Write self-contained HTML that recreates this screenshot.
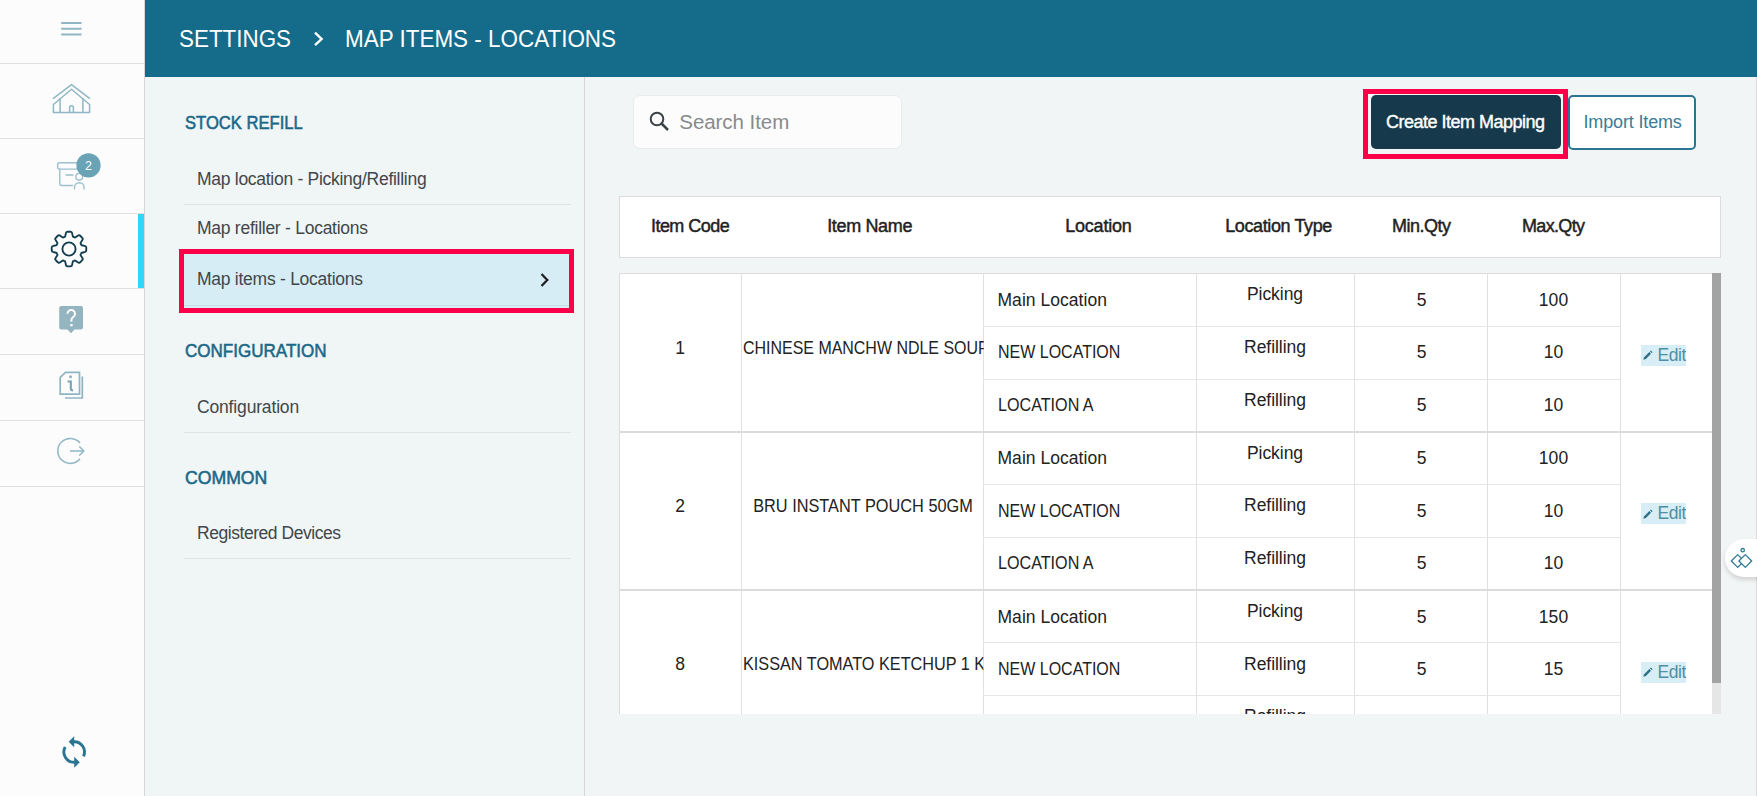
<!DOCTYPE html>
<html><head><meta charset="utf-8">
<style>
*{box-sizing:border-box;margin:0;padding:0}
html,body{width:1757px;height:796px;overflow:hidden;background:#f1f5f5;font-family:"Liberation Sans",sans-serif;position:relative}
.a{position:absolute}
.t{position:absolute;line-height:1;white-space:nowrap}
</style></head><body>
<div class="a" style="left:0;top:0;width:144px;height:796px;background:#fcfcfc"></div>
<div class="a" style="left:144px;top:0;width:1px;height:796px;background:#d6d6d6"></div>
<div class="a" style="left:0;top:63px;width:144px;height:1px;background:#e0e0e0"></div>
<div class="a" style="left:0;top:138px;width:144px;height:1px;background:#e0e0e0"></div>
<div class="a" style="left:0;top:213px;width:144px;height:1px;background:#e0e0e0"></div>
<div class="a" style="left:0;top:288px;width:144px;height:1px;background:#e0e0e0"></div>
<div class="a" style="left:0;top:354px;width:144px;height:1px;background:#e0e0e0"></div>
<div class="a" style="left:0;top:420px;width:144px;height:1px;background:#e0e0e0"></div>
<div class="a" style="left:0;top:486px;width:144px;height:1px;background:#e0e0e0"></div>
<div class="a" style="left:138px;top:214px;width:6px;height:74px;background:#2bd9f5"></div>
<svg class="a" style="left:60px;top:20px" width="24" height="18" viewBox="0 0 24 18"><path d="M1.2 3h20.3M1.2 8.8h20.3M1.2 14.4h20.3" stroke="#8fb5c5" stroke-width="2" fill="none"/></svg>
<svg class="a" style="left:50px;top:80px" width="44" height="36" viewBox="0 0 44 36">
<g fill="none" stroke="#8fb7c5" stroke-width="1.5" stroke-linejoin="round" stroke-linecap="round">
<path d="M3.4 18.3 L21.5 4.6 L39.6 18.3"/>
<path d="M3.4 24.5 L21.5 9.3 L39.6 24.5 V32.4 H3.4 Z"/>
<path d="M10.1 18.8 V32.4 M32.9 18.8 V32.4"/>
<path d="M19.6 32.4 V27.6 a1.9 1.9 0 0 1 3.8 0 V32.4"/>
</g></svg>
<svg class="a" style="left:54px;top:150px" width="50" height="42" viewBox="0 0 50 42">
<g fill="none" stroke="#9bbfcc" stroke-width="1.4" stroke-linecap="round">
<rect x="3.6" y="12.8" width="22" height="6.3" rx="2"/>
<path d="M5.8 19.2 V33.5 a2 2 0 0 0 2 2 H18.5"/>
<path d="M12 25 H19"/>
<circle cx="25.2" cy="26.8" r="3.4"/>
<path d="M20.5 38.9 V37.5 a4.8 4.8 0 0 1 9.6 0 V38.9"/>
</g>
<circle cx="34.5" cy="15.4" r="12.1" fill="#69a3b5"/>
<text x="34.4" y="20" font-family="Liberation Sans" font-size="12.5" fill="#fff" text-anchor="middle">2</text>
</svg>
<svg class="a" style="left:47.9px;top:228.3px" width="42" height="42" viewBox="-21 -21 42 42">
<g fill="none" stroke="#123c50" stroke-width="1.85" stroke-linejoin="round">
<path d="M-4.37 -12.14L-4.06 -12.24Q-3.80 -12.33 -3.50 -13.90L-3.20 -15.48Q-2.90 -17.06 -2.25 -17.14L-1.46 -17.24L0.00 -17.30L1.46 -17.24L2.25 -17.14Q2.90 -17.06 3.20 -15.48L3.50 -13.90Q3.80 -12.33 4.06 -12.24L4.37 -12.14L4.94 -11.92L5.49 -11.67L5.79 -11.53Q6.03 -11.40 7.35 -12.30L8.69 -13.21Q10.01 -14.11 10.53 -13.71L11.16 -13.22L12.23 -12.23L13.22 -11.16L13.71 -10.53Q14.11 -10.01 13.21 -8.69L12.30 -7.35Q11.40 -6.03 11.53 -5.79L11.67 -5.49L11.92 -4.94L12.14 -4.37L12.24 -4.06Q12.33 -3.80 13.90 -3.50L15.48 -3.20Q17.06 -2.90 17.14 -2.25L17.24 -1.46L17.30 0.00L17.24 1.46L17.14 2.25Q17.06 2.90 15.48 3.20L13.90 3.50Q12.33 3.80 12.24 4.06L12.14 4.37L11.92 4.94L11.67 5.49L11.53 5.79Q11.40 6.03 12.30 7.35L13.21 8.69Q14.11 10.01 13.71 10.53L13.22 11.16L12.23 12.23L11.16 13.22L10.53 13.71Q10.01 14.11 8.69 13.21L7.35 12.30Q6.03 11.40 5.79 11.53L5.49 11.67L4.94 11.92L4.37 12.14L4.06 12.24Q3.80 12.33 3.50 13.90L3.20 15.48Q2.90 17.06 2.25 17.14L1.46 17.24L0.00 17.30L-1.46 17.24L-2.25 17.14Q-2.90 17.06 -3.20 15.48L-3.50 13.90Q-3.80 12.33 -4.06 12.24L-4.37 12.14L-4.94 11.92L-5.49 11.67L-5.79 11.53Q-6.03 11.40 -7.35 12.30L-8.69 13.21Q-10.01 14.11 -10.53 13.71L-11.16 13.22L-12.23 12.23L-13.22 11.16L-13.71 10.53Q-14.11 10.01 -13.21 8.69L-12.30 7.35Q-11.40 6.03 -11.53 5.79L-11.67 5.49L-11.92 4.94L-12.14 4.37L-12.24 4.06Q-12.33 3.80 -13.90 3.50L-15.48 3.20Q-17.06 2.90 -17.14 2.25L-17.24 1.46L-17.30 0.00L-17.24 -1.46L-17.14 -2.25Q-17.06 -2.90 -15.48 -3.20L-13.90 -3.50Q-12.33 -3.80 -12.24 -4.06L-12.14 -4.37L-11.92 -4.94L-11.67 -5.49L-11.53 -5.79Q-11.40 -6.03 -12.30 -7.35L-13.21 -8.69Q-14.11 -10.01 -13.71 -10.53L-13.22 -11.16L-12.23 -12.23L-11.16 -13.22L-10.53 -13.71Q-10.01 -14.11 -8.69 -13.21L-7.35 -12.30Q-6.03 -11.40 -5.79 -11.53L-5.49 -11.67L-4.94 -11.92L-4.37 -12.14Z"/><circle cx="0" cy="0" r="6.6"/></g></svg>
<svg class="a" style="left:58px;top:305px" width="27" height="30" viewBox="0 0 27 30">
<path d="M3.2 1 H23 a2 2 0 0 1 2 2 V22.5 a2 2 0 0 1 -2 2 H16.5 L13 28.3 L9.5 24.5 H3.2 a2 2 0 0 1 -2 -2 V3 a2 2 0 0 1 2 -2 z" fill="#94b4c0"/>
<path d="M9.4 8.8 a3.8 3.8 0 1 1 5.8 3.2 c-1.3 0.8 -1.8 1.6 -1.8 3.2 v1.2" stroke="#fff" stroke-width="2" fill="none"/>
<rect x="12.3" y="19" width="2.3" height="2.3" fill="#fff"/></svg>
<svg class="a" style="left:59px;top:371px" width="27" height="30" viewBox="0 0 27 30">
<g fill="none" stroke="#8fb5c3" stroke-width="1.7">
<path d="M6.5 1.3 H20.5 V23.2 H1.2 V6.3 Z"/>
<path d="M23.3 5.5 V27 H6"/></g>
<circle cx="11.6" cy="5.8" r="1.5" fill="#8fb5c3"/>
<path d="M8.5 10.5 H11.8 V17.8 c0 1 0.5 1.5 2.2 1.5" stroke="#7aa7b7" stroke-width="2.2" fill="none"/></svg>
<svg class="a" style="left:57px;top:436px" width="30" height="30" viewBox="0 0 30 30">
<g fill="none" stroke="#8fb7c6" stroke-width="1.5">
<path d="M23 7 A12.5 12.5 0 1 0 23 22.8"/>
<path d="M13 15 H26.5 M22.3 10.5 L26.8 15 L22.3 19.5"/></g></svg>
<svg class="a" style="left:58px;top:732px" width="32" height="40" viewBox="0 0 32 40">
<g fill="none" stroke="#2b7592" stroke-width="2.9">
<path d="M15.6 9.7 A10.3 10.3 0 0 1 25.53 24.35"/>
<path d="M16.8 30.3 A10.3 10.3 0 0 1 7.19 15.01"/></g>
<g fill="#2b7592">
<path d="M10.6 9.8 L16.2 4.3 L16.2 15.3 Z"/>
<path d="M21.8 30.2 L16.2 24.7 L16.2 35.8 Z"/></g></svg>
<div class="a" style="left:145px;top:0;width:1612px;height:77px;background:#156b8a"></div>
<div class="t" style="left:178.7px;top:28.11px;font-size:23.5px;color:#fff;letter-spacing:0px;font-weight:400;transform:scaleX(0.953);transform-origin:0 0;">SETTINGS</div>
<svg class="a" style="left:312px;top:31px" width="14" height="16" viewBox="0 0 14 16"><path d="M3 1.6 L9.6 8 L3 14.2" stroke="#fff" stroke-width="2.4" fill="none"/></svg>
<div class="t" style="left:345.2px;top:28.11px;font-size:23.5px;color:#fff;letter-spacing:0px;font-weight:400;transform:scaleX(0.955);transform-origin:0 0;">MAP ITEMS - LOCATIONS</div>
<div class="a" style="left:145px;top:77px;width:439px;height:719px;background:#f0f5f5"></div>
<div class="a" style="left:584px;top:77px;width:1px;height:719px;background:#d8d5d5"></div>
<div class="t" style="left:185px;top:114.26px;font-size:18px;color:#1a6888;letter-spacing:0px;font-weight:400;-webkit-text-stroke:0.55px #1a6888;transform:scaleX(0.922);transform-origin:0 0;">STOCK REFILL</div>
<div class="t" style="left:197px;top:170.69px;font-size:17.5px;color:#3f474a;letter-spacing:-0.28px;font-weight:400;">Map location - Picking/Refilling</div>
<div class="a" style="left:184px;top:204px;width:387px;height:1px;background:#dde3e3"></div>
<div class="t" style="left:197px;top:219.59px;font-size:17.5px;color:#3f474a;letter-spacing:-0.26px;font-weight:400;">Map refiller - Locations</div>
<div class="a" style="left:184px;top:254px;width:385px;height:54px;background:#d6edf5"></div>
<div class="a" style="left:184px;top:305px;width:385px;height:1px;background:#c9dde3"></div>
<div class="a" style="left:179px;top:249px;width:395px;height:64px;border:5px solid #fb0049"></div>
<div class="t" style="left:197px;top:270.59px;font-size:17.5px;color:#3f474a;letter-spacing:-0.26px;font-weight:400;">Map items - Locations</div>
<svg class="a" style="left:538px;top:272px" width="14" height="16" viewBox="0 0 14 16"><path d="M3.5 2 L9.3 8 L3.5 14" stroke="#222" stroke-width="2.3" fill="none"/></svg>
<div class="t" style="left:184.5px;top:341.76px;font-size:18px;color:#1a6888;letter-spacing:0px;font-weight:400;-webkit-text-stroke:0.55px #1a6888;transform:scaleX(0.946);transform-origin:0 0;">CONFIGURATION</div>
<div class="t" style="left:197px;top:398.79px;font-size:17.5px;color:#3f474a;letter-spacing:-0.16px;font-weight:400;">Configuration</div>
<div class="a" style="left:184px;top:432px;width:387px;height:1px;background:#dde3e3"></div>
<div class="t" style="left:184.5px;top:469.06px;font-size:18px;color:#1a6888;letter-spacing:0px;font-weight:400;-webkit-text-stroke:0.55px #1a6888;transform:scaleX(0.98);transform-origin:0 0;">COMMON</div>
<div class="t" style="left:197px;top:524.79px;font-size:17.5px;color:#3f474a;letter-spacing:-0.45px;font-weight:400;">Registered Devices</div>
<div class="a" style="left:184px;top:558px;width:387px;height:1px;background:#dde3e3"></div>
<div class="a" style="left:633px;top:95px;width:269px;height:53.5px;background:#fcfcfc;border:1px solid #e9eded;border-radius:7px"></div>
<svg class="a" style="left:648px;top:110px" width="23" height="23" viewBox="0 0 23 23"><circle cx="9" cy="9" r="6.3" stroke="#3a4346" stroke-width="2.0" fill="none"/><path d="M13.5 13.5 L20 20" stroke="#3a4346" stroke-width="2.5"/></svg>
<div class="t" style="left:679.3px;top:112.15px;font-size:20.5px;color:#868b8d;letter-spacing:-0.06px;font-weight:400;">Search Item</div>
<div class="a" style="left:1363px;top:89px;width:205px;height:70px;border:5px solid #fb0049"></div>
<div class="a" style="left:1371px;top:95px;width:190px;height:54px;background:#163a4c;border-radius:5px"></div>
<div class="t" style="left:1386px;top:113.06px;font-size:18px;color:#fff;letter-spacing:-0.5px;font-weight:400;-webkit-text-stroke:0.4px #fff;">Create Item Mapping</div>
<div class="a" style="left:1568px;top:95px;width:128px;height:55px;background:#fff;border:2px solid #2b7592;border-radius:5px"></div>
<div class="t" style="left:1583.5px;top:113.06px;font-size:18px;color:#3a7c95;letter-spacing:-0.15px;font-weight:400;">Import Items</div>
<div class="a" style="left:619px;top:196px;width:1102px;height:62px;background:#fff;border:1px solid #dcdcdc"></div>
<div class="t" style="left:651px;top:217.16px;font-size:18px;color:#1f2223;letter-spacing:-0.55px;font-weight:400;-webkit-text-stroke:0.45px #1f2223;">Item Code</div>
<div class="t" style="left:827.2px;top:217.16px;font-size:18px;color:#1f2223;letter-spacing:-0.35px;font-weight:400;-webkit-text-stroke:0.45px #1f2223;">Item Name</div>
<div class="t" style="left:1065.2px;top:217.16px;font-size:18px;color:#1f2223;letter-spacing:-0.21px;font-weight:400;-webkit-text-stroke:0.45px #1f2223;">Location</div>
<div class="t" style="left:1225.2px;top:217.16px;font-size:18px;color:#1f2223;letter-spacing:-0.39px;font-weight:400;-webkit-text-stroke:0.45px #1f2223;">Location Type</div>
<div class="t" style="left:1392px;top:217.16px;font-size:18px;color:#1f2223;letter-spacing:-0.5px;font-weight:400;-webkit-text-stroke:0.45px #1f2223;">Min.Qty</div>
<div class="t" style="left:1522px;top:217.16px;font-size:18px;color:#1f2223;letter-spacing:-0.67px;font-weight:400;-webkit-text-stroke:0.45px #1f2223;">Max.Qty</div>
<div class="a" style="left:619px;top:273px;width:1093px;height:441px;background:#fff;overflow:hidden"><div class="a" style="left:0;top:0;width:1px;height:441px;background:#dcdcdc"></div>
<div class="a" style="left:0;top:0;width:1093px;height:1px;background:#dcdcdc"></div>
<div class="a" style="left:122px;top:0;width:1px;height:441px;background:#e0e0e0"></div>
<div class="a" style="left:364px;top:0;width:1px;height:441px;background:#e0e0e0"></div>
<div class="a" style="left:577px;top:0;width:1px;height:441px;background:#e0e0e0"></div>
<div class="a" style="left:735px;top:0;width:1px;height:441px;background:#e0e0e0"></div>
<div class="a" style="left:868px;top:0;width:1px;height:441px;background:#e0e0e0"></div>
<div class="a" style="left:1001px;top:0;width:1px;height:441px;background:#e0e0e0"></div>
<div class="a" style="left:364px;top:53px;width:637px;height:1px;background:#e6e6e6"></div>
<div class="a" style="left:364px;top:106px;width:637px;height:1px;background:#e6e6e6"></div>
<div class="t" style="left:0px;top:66.69px;font-size:17.5px;color:#222;letter-spacing:0px;font-weight:400;width:122px;text-align:center;">1</div>
<div class="t" style="left:123.5px;top:66.69px;font-size:17.5px;color:#222;letter-spacing:0px;font-weight:400;transform:scaleX(0.912);transform-origin:0 0;width:263.71px;overflow:hidden;">CHINESE MANCHW NDLE SOUP</div>
<div class="t" style="left:378.5px;top:18.69px;font-size:17.5px;color:#222;letter-spacing:0.04px;font-weight:400;">Main Location</div>
<div class="t" style="left:577px;top:13.39px;font-size:17.5px;color:#222;letter-spacing:-0.05px;font-weight:400;width:158px;text-align:center;">Picking</div>
<div class="t" style="left:736px;top:18.69px;font-size:17.5px;color:#222;letter-spacing:0px;font-weight:400;width:133px;text-align:center;">5</div>
<div class="t" style="left:868px;top:18.69px;font-size:17.5px;color:#222;letter-spacing:0.1px;font-weight:400;width:133px;text-align:center;">100</div>
<div class="t" style="left:378.5px;top:71.29px;font-size:17.5px;color:#222;letter-spacing:0px;font-weight:400;transform:scaleX(0.914);transform-origin:0 0;">NEW LOCATION</div>
<div class="t" style="left:577px;top:65.99px;font-size:17.5px;color:#222;letter-spacing:-0.05px;font-weight:400;width:158px;text-align:center;">Refilling</div>
<div class="t" style="left:736px;top:71.29px;font-size:17.5px;color:#222;letter-spacing:0px;font-weight:400;width:133px;text-align:center;">5</div>
<div class="t" style="left:868px;top:71.29px;font-size:17.5px;color:#222;letter-spacing:0.1px;font-weight:400;width:133px;text-align:center;">10</div>
<div class="t" style="left:378.5px;top:123.89px;font-size:17.5px;color:#222;letter-spacing:0px;font-weight:400;transform:scaleX(0.922);transform-origin:0 0;">LOCATION A</div>
<div class="t" style="left:577px;top:118.59px;font-size:17.5px;color:#222;letter-spacing:-0.05px;font-weight:400;width:158px;text-align:center;">Refilling</div>
<div class="t" style="left:736px;top:123.89px;font-size:17.5px;color:#222;letter-spacing:0px;font-weight:400;width:133px;text-align:center;">5</div>
<div class="t" style="left:868px;top:123.89px;font-size:17.5px;color:#222;letter-spacing:0.1px;font-weight:400;width:133px;text-align:center;">10</div>
<div class="a" style="left:1022px;top:71.8px;width:45px;height:21px;background:#d7eef6;overflow:hidden"><svg class="a" style="left:0.5px;top:5.5px" width="12" height="11" viewBox="0 0 12 11"><path d="M1.2 9.8 L2.2 7.2 L7.3 2.1 L9.0 3.8 L3.9 8.9 Z" fill="#2f6f86"/><path d="M8.0 1.4 L8.9 0.5 L10.6 2.2 L9.7 3.1 Z" fill="#2f6f86"/></svg><div class="t" style="left:16.5px;top:2.39px;font-size:17.5px;color:#4f8ea3;letter-spacing:-0.43px;font-weight:400;">Edit</div></div>
<div class="a" style="left:0;top:158.0px;width:1093px;height:2px;background:#dcdcdc"></div>
<div class="a" style="left:364px;top:211px;width:637px;height:1px;background:#e6e6e6"></div>
<div class="a" style="left:364px;top:264px;width:637px;height:1px;background:#e6e6e6"></div>
<div class="t" style="left:0px;top:224.99px;font-size:17.5px;color:#222;letter-spacing:0px;font-weight:400;width:122px;text-align:center;">2</div>
<div class="t" style="left:123px;top:224.99px;font-size:17.5px;color:#222;letter-spacing:0px;font-weight:400;transform:scaleX(0.932);transform-origin:50% 0;width:242px;text-align:center;">BRU INSTANT POUCH 50GM</div>
<div class="t" style="left:378.5px;top:176.99px;font-size:17.5px;color:#222;letter-spacing:0.04px;font-weight:400;">Main Location</div>
<div class="t" style="left:577px;top:171.69px;font-size:17.5px;color:#222;letter-spacing:-0.05px;font-weight:400;width:158px;text-align:center;">Picking</div>
<div class="t" style="left:736px;top:176.99px;font-size:17.5px;color:#222;letter-spacing:0px;font-weight:400;width:133px;text-align:center;">5</div>
<div class="t" style="left:868px;top:176.99px;font-size:17.5px;color:#222;letter-spacing:0.1px;font-weight:400;width:133px;text-align:center;">100</div>
<div class="t" style="left:378.5px;top:229.59px;font-size:17.5px;color:#222;letter-spacing:0px;font-weight:400;transform:scaleX(0.914);transform-origin:0 0;">NEW LOCATION</div>
<div class="t" style="left:577px;top:224.29px;font-size:17.5px;color:#222;letter-spacing:-0.05px;font-weight:400;width:158px;text-align:center;">Refilling</div>
<div class="t" style="left:736px;top:229.59px;font-size:17.5px;color:#222;letter-spacing:0px;font-weight:400;width:133px;text-align:center;">5</div>
<div class="t" style="left:868px;top:229.59px;font-size:17.5px;color:#222;letter-spacing:0.1px;font-weight:400;width:133px;text-align:center;">10</div>
<div class="t" style="left:378.5px;top:282.19px;font-size:17.5px;color:#222;letter-spacing:0px;font-weight:400;transform:scaleX(0.922);transform-origin:0 0;">LOCATION A</div>
<div class="t" style="left:577px;top:276.89px;font-size:17.5px;color:#222;letter-spacing:-0.05px;font-weight:400;width:158px;text-align:center;">Refilling</div>
<div class="t" style="left:736px;top:282.19px;font-size:17.5px;color:#222;letter-spacing:0px;font-weight:400;width:133px;text-align:center;">5</div>
<div class="t" style="left:868px;top:282.19px;font-size:17.5px;color:#222;letter-spacing:0.1px;font-weight:400;width:133px;text-align:center;">10</div>
<div class="a" style="left:1022px;top:230.1px;width:45px;height:21px;background:#d7eef6;overflow:hidden"><svg class="a" style="left:0.5px;top:5.5px" width="12" height="11" viewBox="0 0 12 11"><path d="M1.2 9.8 L2.2 7.2 L7.3 2.1 L9.0 3.8 L3.9 8.9 Z" fill="#2f6f86"/><path d="M8.0 1.4 L8.9 0.5 L10.6 2.2 L9.7 3.1 Z" fill="#2f6f86"/></svg><div class="t" style="left:16.5px;top:2.39px;font-size:17.5px;color:#4f8ea3;letter-spacing:-0.43px;font-weight:400;">Edit</div></div>
<div class="a" style="left:0;top:316.0px;width:1093px;height:2px;background:#dcdcdc"></div>
<div class="a" style="left:364px;top:369px;width:637px;height:1px;background:#e6e6e6"></div>
<div class="a" style="left:364px;top:422px;width:637px;height:1px;background:#e6e6e6"></div>
<div class="t" style="left:0px;top:382.59px;font-size:17.5px;color:#222;letter-spacing:0px;font-weight:400;width:122px;text-align:center;">8</div>
<div class="t" style="left:123.5px;top:382.59px;font-size:17.5px;color:#222;letter-spacing:0px;font-weight:400;transform:scaleX(0.928);transform-origin:0 0;width:259.16px;overflow:hidden;">KISSAN TOMATO KETCHUP 1 KG</div>
<div class="t" style="left:378.5px;top:335.59px;font-size:17.5px;color:#222;letter-spacing:0.04px;font-weight:400;">Main Location</div>
<div class="t" style="left:577px;top:330.29px;font-size:17.5px;color:#222;letter-spacing:-0.05px;font-weight:400;width:158px;text-align:center;">Picking</div>
<div class="t" style="left:736px;top:335.59px;font-size:17.5px;color:#222;letter-spacing:0px;font-weight:400;width:133px;text-align:center;">5</div>
<div class="t" style="left:868px;top:335.59px;font-size:17.5px;color:#222;letter-spacing:0.1px;font-weight:400;width:133px;text-align:center;">150</div>
<div class="t" style="left:378.5px;top:388.19px;font-size:17.5px;color:#222;letter-spacing:0px;font-weight:400;transform:scaleX(0.914);transform-origin:0 0;">NEW LOCATION</div>
<div class="t" style="left:577px;top:382.89px;font-size:17.5px;color:#222;letter-spacing:-0.05px;font-weight:400;width:158px;text-align:center;">Refilling</div>
<div class="t" style="left:736px;top:388.19px;font-size:17.5px;color:#222;letter-spacing:0px;font-weight:400;width:133px;text-align:center;">5</div>
<div class="t" style="left:868px;top:388.19px;font-size:17.5px;color:#222;letter-spacing:0.1px;font-weight:400;width:133px;text-align:center;">15</div>
<div class="t" style="left:378.5px;top:440.79px;font-size:17.5px;color:#222;letter-spacing:0px;font-weight:400;transform:scaleX(0.922);transform-origin:0 0;">LOCATION A</div>
<div class="t" style="left:577px;top:435.49px;font-size:17.5px;color:#222;letter-spacing:-0.05px;font-weight:400;width:158px;text-align:center;">Refilling</div>
<div class="t" style="left:736px;top:440.79px;font-size:17.5px;color:#222;letter-spacing:0px;font-weight:400;width:133px;text-align:center;">5</div>
<div class="t" style="left:868px;top:440.79px;font-size:17.5px;color:#222;letter-spacing:0.1px;font-weight:400;width:133px;text-align:center;">10</div>
<div class="a" style="left:1022px;top:388.7px;width:45px;height:21px;background:#d7eef6;overflow:hidden"><svg class="a" style="left:0.5px;top:5.5px" width="12" height="11" viewBox="0 0 12 11"><path d="M1.2 9.8 L2.2 7.2 L7.3 2.1 L9.0 3.8 L3.9 8.9 Z" fill="#2f6f86"/><path d="M8.0 1.4 L8.9 0.5 L10.6 2.2 L9.7 3.1 Z" fill="#2f6f86"/></svg><div class="t" style="left:16.5px;top:2.39px;font-size:17.5px;color:#4f8ea3;letter-spacing:-0.43px;font-weight:400;">Edit</div></div></div>
<div class="a" style="left:1712px;top:273px;width:9px;height:441px;background:#e6e6e6"></div>
<div class="a" style="left:1712px;top:273px;width:9px;height:410px;background:#a3a3a3"></div>
<div class="a" style="left:1756px;top:77px;width:1px;height:719px;background:#dcdcdc"></div>
<div class="a" style="left:1725px;top:539px;width:50px;height:38px;background:#fff;border-radius:19px;box-shadow:0 3px 4px rgba(60,40,40,0.16)"></div>
<svg class="a" style="left:1729px;top:544px" width="28" height="28" viewBox="0 0 28 28">
<g fill="none" stroke="#2f7a96" stroke-width="1.3" stroke-linejoin="round">
<circle cx="13.7" cy="6.2" r="1.7"/>
<path d="M8.7 10.6 L15.1 17 L8.7 23.4 L2.3 17 Z"/>
<path d="M16.3 10.6 L22.7 17 L16.3 23.4 L9.9 17 Z" fill="#fff"/></g></svg>
</body></html>
